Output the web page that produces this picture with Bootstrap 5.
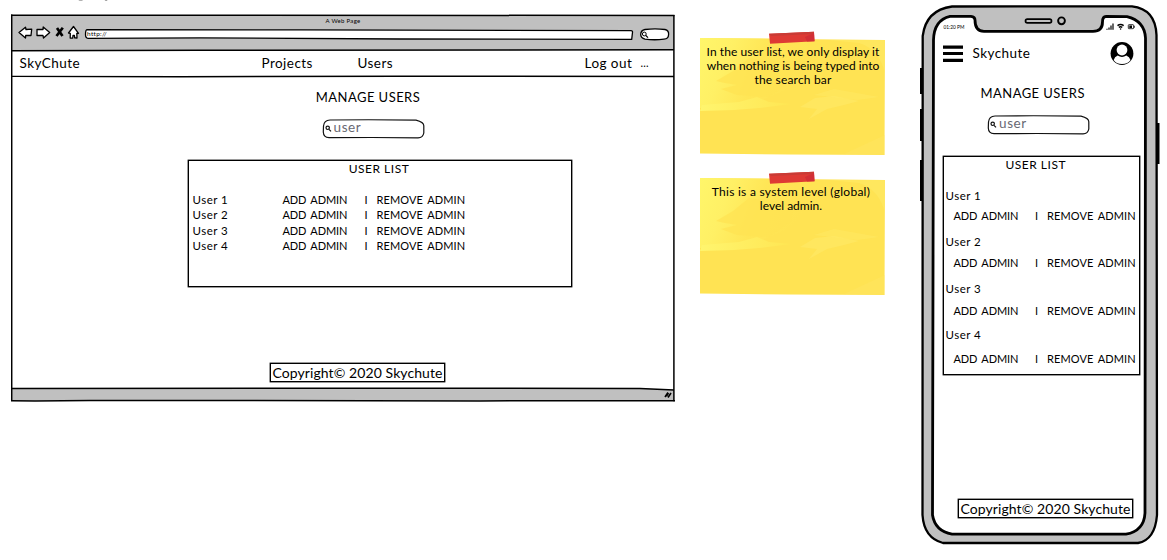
<!DOCTYPE html>
<html lang="en">
<head>
<meta charset="utf-8">
<meta name="viewport" content="width=device-width, initial-scale=1">
<title>Manage users wireframe</title>
<link href="https://cdn.jsdelivr.net/npm/bootstrap@5.3.0/dist/css/bootstrap.min.css" rel="stylesheet">
<style>
body{font-family:Lato,"Liberation Sans",sans-serif;color:#000;background:#fff;overflow:hidden}
.board{width:1167px;height:560px;overflow:hidden}
.sheet{position:absolute;left:0;top:0;pointer-events:none}
.window{width:664px;height:388px;margin:14px 0 0 11px}
.window>*:not(.sheet),.phone>*:not(.sheet),.memo>*:not(.sheet){position:relative}
.toolbar{height:37px}
.win-title{font-size:6px;line-height:8px;padding-top:3px;letter-spacing:.3px}
.tools{height:17px}
.address{font-size:6.5px;line-height:9px;letter-spacing:.3px;padding-left:76px}
.sitebar{height:26px;font-size:13.5px;line-height:24px;letter-spacing:.45px;display:grid;grid-template-columns:242px 96px 227px 56px 1fr;padding-left:8.5px}
.sitebar .more{font-size:11px;letter-spacing:.2px}
.heading{font-size:13px;line-height:20px;letter-spacing:.45px}
.window .heading{margin-top:9.5px;padding-left:50px}
.finder{width:103px;height:19px;font-size:13.5px;line-height:17px;letter-spacing:.6px;color:#686872;padding-left:12px}
.window .finder{margin:12px 0 0 310.5px}
.panel{border:1px solid #000;box-shadow:0 0 0 .4px #000}
.panel-title{font-size:12px;line-height:16px;letter-spacing:.5px}
.who{font-size:11.5px;letter-spacing:.5px}
.act{font-size:11px;letter-spacing:-.1px;word-spacing:1.6px}
.act-rm{font-size:11px;letter-spacing:.1px;word-spacing:1.8px}
.wide{width:384px;height:127px;margin-left:177px;margin-top:22px}
.wide .panel-title{padding-right:2px}
.wide .people{display:grid;grid-template-columns:90px 82px 12px auto;line-height:15.4px;padding-left:3.5px;margin-top:15.5px}
.legal{border:1px solid #000;box-shadow:0 0 0 .4px #000;width:175px;height:19px;font-size:14px;line-height:17px;letter-spacing:.08px}
.window .legal{margin:76px 0 0 259px}
.notes{margin:31px 0 0 24px;width:188px}
.memo{width:188px;height:124px;font-size:12px;line-height:14px;padding-top:14px;margin-bottom:15.5px}
.phone{width:240px;height:542px;margin:4px 0 0 33px}
.status{font-size:4.8px;line-height:8px;padding:19px 0 0 23.5px}
.brand{font-size:13.5px;line-height:20px;letter-spacing:.45px;padding:12px 0 0 52.5px}
.phone .heading{margin-top:19.5px;padding-left:60.5px}
.phone .finder{margin:12px 0 0 67px}
.narrow{width:197px;height:219px;margin-left:22.5px;margin-top:22px}
.narrow .panel-title{padding-left:62px}
.narrow .people{display:grid;grid-template-columns:10px 81.5px 12px auto;grid-template-rows:20px 26.5px 20.5px 26px 22.5px 24px 24px 16px;line-height:16px;margin-top:15px}
.narrow .who{grid-column:1/-1;padding-left:2px}
.narrow .act.add{grid-column:2}
.phone .legal{margin:124px 0 0 38px}
</style>
<script src="https://cdn.jsdelivr.net/npm/bootstrap@5.3.0/dist/js/bootstrap.bundle.min.js"></script>
</head>
<body>
<main class="board d-flex align-items-start position-relative">
  <!-- descenders of a caption that runs off the top edge -->
  <svg class="sheet" width="200" height="4" fill="none" stroke="#666" stroke-width="1.1"><path d="M78.500-.5q2.500 1.200 5-.3M105-.2q1.500.8 3-.8"/></svg>

  <section class="window position-relative flex-shrink-0">
    <svg class="sheet" width="664" height="390" viewBox="11 14 664 390" fill="none" stroke="#000">
      <path d="M11 15.300L674 15.400V50L11 50.500Z" fill="#c0c0c0" stroke="none"/>
      <path d="M11 388.500L500 388.300L640 388.500L674 390V401L480 400.800L70 400.500L11 401Z" fill="#c0c0c0" stroke="none"/>
      <path d="M11 15.300L674.500 15.400" stroke-width="1.500"/>
      <path d="M11.700 14.500V400.500" stroke-width="1.500"/>
      <path d="M673.900 15V401.300" stroke-width="1.500"/>
      <path d="M11 50.700L200 50.300L674 49.800M11 76.400L180 76.700L400 76.200L674 76.500" stroke-width="1.400"/>
      <path d="M11 388.400L500 388.300L640 388.500L674 390M11 400.700L35 401L90 400.400L480 400.900L675 400.700" stroke-width="1.500"/>
      <path d="M665 397l3-4.500M668 397.500l3-4.500M666.500 396l2-3" stroke-width="1.600"/>
      <g fill="#fff" stroke-width="1.300" stroke-linejoin="round">
        <path d="M19 32.500L25.500 27.200L26 29.500L31.700 29.100L31 35.500L25.700 35.500L25.500 38Z"/>
        <path d="M37 29.300L43 29.500L43.200 27L49.700 32.400L43.500 38.100L43 35.500L37 35.500Z"/>
        <path d="M68.500 33L73.500 26.500L78.500 33.300L76.800 33.500L77 38L74.700 37.900L74.400 35.500L73 35.500L72.700 38.200L70.200 38L70.300 33.400Z"/>
        <path d="M87 29.700L300 29.900L631 30.700Q632.700 30.700 632.500 32.500L631.700 39.300L400 39L200 37.900L88 38.300Q85.500 38.200 85.500 34.500Q85.500 30 87 29.700Z"/>
        <path d="M645 29.500Q655 28.200 665 29.500Q669 30.500 668.600 34.500Q668.500 38.800 664 39.200Q654 40.300 645 39.100Q640.700 38 640.700 34.500Q640.800 30.200 645 29.500Z"/>
      </g>
      <path d="M57 28L62.500 36M62.800 27.800L56.500 36" stroke-width="2.700"/>
      <circle cx="644.300" cy="34" r="1.900"/><path d="M645.800 35.500L648 37.700" stroke-width="1.200"/>
    </svg>
    <div class="toolbar">
      <div class="win-title text-center">A Web Page</div>
      <div class="tools d-flex align-items-center"><span class="address">http://</span></div>
    </div>
    <nav class="sitebar"><span>SkyChute</span><span>Projects</span><span>Users</span><span>Log out</span><span class="more">...</span></nav>
    <div class="heading text-center">MANAGE USERS</div>
    <div class="finder position-relative">
      <svg class="sheet" width="103" height="20" fill="none" stroke="#111" stroke-width="1.200"><path d="M8 1Q50 .5 94 1.100Q102 3 101.800 7V14Q101 18.700 96 18.800L50 18.500L7 18.700Q1.500 18.500 1.300 13L1.500 7Q2 1.300 8 1Z"/><circle cx="5.700" cy="8.800" r="1.700"/><path d="M7 10.300L9 12.300"/></svg>
      user</div>
    <div class="panel wide">
      <div class="panel-title text-center">USER LIST</div>
      <div class="people">
        <span class="who">User 1</span><span class="act">ADD ADMIN</span><span class="act">I</span><span class="act-rm">REMOVE ADMIN</span>
        <span class="who">User 2</span><span class="act">ADD ADMIN</span><span class="act">I</span><span class="act-rm">REMOVE ADMIN</span>
        <span class="who">User 3</span><span class="act">ADD ADMIN</span><span class="act">I</span><span class="act-rm">REMOVE ADMIN</span>
        <span class="who">User 4</span><span class="act">ADD ADMIN</span><span class="act">I</span><span class="act-rm">REMOVE ADMIN</span>
      </div>
    </div>
    <footer class="legal text-center text-nowrap">Copyright© 2020 Skychute</footer>
  </section>

  <aside class="notes flex-shrink-0">
    <svg width="0" height="0" class="position-absolute">
      <defs>
        <linearGradient id="glow" x1="0" x2="1" y1="0" y2=".25"><stop offset="0" stop-color="#fff66a"/><stop offset=".3" stop-color="#fff065"/><stop offset=".6" stop-color="#ffe656"/><stop offset="1" stop-color="#ffe353"/></linearGradient>
        <linearGradient id="fade"><stop offset="0" stop-color="#fff56e"/><stop offset="1" stop-color="#ffe653"/></linearGradient>
        <g id="sticky">
          <path d="M1 7L90 8L186 9L185.500 124L90 123.500L1 122.500Z" fill="#ffe353"/>
          <path d="M1 7L110 8L107 38L95 52L84 60L60 70L1 77Z" fill="url(#glow)"/>
          <path d="M17 50L34 40L50 27L95 33L92 50L70 66L38 64L22 58L38 54L26 52Z" fill="#ffe353" opacity=".75"/>
          <path d="M1 80L3 74L40 71L58 66L70 71L92 73L60 77L35 79Z" fill="url(#fade)"/>
          <path d="M101 76L116 67L135 65L160 70L145 74L128 78L110 88L118 78Z" fill="#ffe968" opacity=".6"/>
          <path d="M115 64L135 58L180 66L158 69Z" fill="#ffea6a" opacity=".4"/>
          <path d="M130 9L186 9V42Q180 18 160 12Z" fill="#ffea65" opacity=".6"/>
          <path d="M145 123L186 104V124Z" fill="#ffe86b" opacity=".3"/>
          <path d="M70 2.800L115 .8L115.500 10.300L71 12.800Z" fill="#de3a34"/>
          <path d="M70 2.800L115 .8L114 3L72 5Z" fill="#c93b35"/>
          <path d="M106 6L115 2L115.500 10.300L108 10.500Z" fill="#d22f35"/>
        </g>
      </defs>
    </svg>
    <div class="memo position-relative text-center text-nowrap">
      <svg class="sheet" width="188" height="126"><use href="#sticky"/></svg>
      <div><span style="letter-spacing:.08px">In the user list, we only display it</span><br><span>when nothing is being typed into</span><br><span style="letter-spacing:.17px">the search bar</span></div>
    </div>
    <div class="memo position-relative text-center text-nowrap">
      <svg class="sheet" width="188" height="126"><use href="#sticky"/></svg>
      <div class="pe-1"><span style="letter-spacing:.27px">This is a system level (global)</span><br><span>level admin.</span></div>
    </div>
  </aside>

  <section class="phone position-relative flex-shrink-0">
    <svg class="sheet" width="242" height="544" viewBox="921 4 242 544" fill="none" stroke="#000">
      <path d="M922.500 68V94M922.500 109V141M922.500 160V201M1159 123V164" stroke-width="3"/>
      <path d="M953 6.500L1133 6.300Q1156.500 9 1157.500 35L1158 515Q1156 540 1139 543L944 543Q925 538 923.500 515L923.700 36Q927 10 953 6.500Z" fill="#c0c0c0" stroke-width="2.300"/>
      <path d="M951 16.300H972Q976 16.500 976 20Q976 31.300 985 31.300H1094Q1103.500 31.300 1103.500 22Q1103.500 16.500 1107 16.500L1128 16.700Q1145.500 21 1146.500 38L1146 513Q1145 531 1127 534.200H953Q936 531 933.500 515L934.500 40Q935 20 951 16.300Z" fill="#fff" stroke-width="2.800"/>
      <rect x="1026.500" y="19.200" width="26" height="3.600" rx="1.800" stroke-width="1.700"/>
      <circle cx="1062.500" cy="20.800" r="3.400" stroke-width="1.900"/>
      <path d="M1108 29.800V28.800M1110 29.800V27.500M1112 29.800V25.500M1114 29.800V23.500" stroke-width="1.200"/>
      <path d="M1118.500 25.600Q1121.500 23.300 1124.700 25.600M1119.800 27.400Q1121.500 26 1123.300 27.400" stroke-width="1.400"/><circle cx="1121.600" cy="29" r=".8" fill="#000" stroke="none"/>
      <rect x="1129.300" y="24.700" width="5.300" height="4" rx=".6" stroke-width=".8"/><path d="M1130.300 25.500H1133V28H1130.300Z" fill="#000" stroke="none"/><path d="M1135.400 25.800V27.800" stroke-width=".7"/>
      <path d="M944 47.100H964M944 53.500H964M944 60.300H964" stroke-width="3.200"/>
      <circle cx="1123" cy="53.500" r="11.400" fill="#000" stroke="none"/>
      <circle cx="1123" cy="50" r="5.400" fill="#fff" stroke="none"/>
      <path d="M1114.700 60Q1115.500 56.500 1118.700 55.500Q1123 58.300 1127.300 55.500Q1130.500 56.500 1131.500 60Q1129 63.800 1123 64Q1117 63.800 1114.700 60Z" fill="#fff" stroke="none"/>
    </svg>
    <div class="status">01:20 PM</div>
    <div class="brand">Skychute</div>
    <div class="heading">MANAGE USERS</div>
    <div class="finder position-relative">
      <svg class="sheet" width="103" height="20" fill="none" stroke="#111" stroke-width="1.200"><path d="M8 1Q50 .5 94 1.100Q102 3 101.800 7V14Q101 18.700 96 18.800L50 18.500L7 18.700Q1.500 18.500 1.300 13L1.500 7Q2 1.300 8 1Z"/><circle cx="5.700" cy="8.800" r="1.700"/><path d="M7 10.300L9 12.300"/></svg>
      user</div>
    <div class="panel narrow">
      <div class="panel-title">USER LIST</div>
      <div class="people">
        <span class="who">User 1</span><span class="act add">ADD ADMIN</span><span class="act">I</span><span class="act-rm">REMOVE ADMIN</span>
        <span class="who">User 2</span><span class="act add">ADD ADMIN</span><span class="act">I</span><span class="act-rm">REMOVE ADMIN</span>
        <span class="who">User 3</span><span class="act add">ADD ADMIN</span><span class="act">I</span><span class="act-rm">REMOVE ADMIN</span>
        <span class="who">User 4</span><span class="act add">ADD ADMIN</span><span class="act">I</span><span class="act-rm">REMOVE ADMIN</span>
      </div>
    </div>
    <footer class="legal text-center text-nowrap">Copyright© 2020 Skychute</footer>
  </section>
</main>
</body>
</html>
